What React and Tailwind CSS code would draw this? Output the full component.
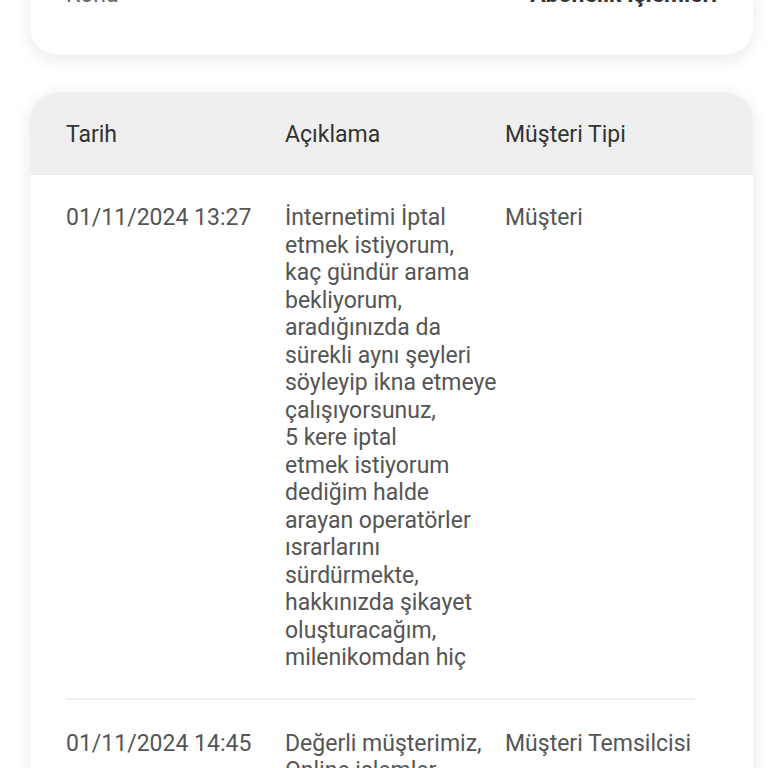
import React from "react";

const font = { fontFamily: "Roboto, 'Noto Sans', sans-serif" };

const row1 = [
  "İnternetimi İptal",
  "etmek istiyorum,",
  "kaç gündür arama",
  "bekliyorum,",
  "aradığınızda da",
  "sürekli aynı şeyleri",
  "söyleyip ikna etmeye",
  "çalışıyorsunuz,",
  "5 kere iptal",
  "etmek istiyorum",
  "dediğim halde",
  "arayan operatörler",
  "ısrarlarını",
  "sürdürmekte,",
  "hakkınızda şikayet",
  "oluşturacağım,",
  "milenikomdan hiç",
];

const row2 = ["Değerli müşterimiz,", "Online işlemler"];

function Row({ date, lines, type, pt, pb, divider }) {
  return (
    <div className={divider ? "border-b-2 border-[#efefef]" : ""}>
      <div className={`flex text-[23px] leading-[27.5px] text-[#555] ${pt} ${pb}`}>
        <div className="w-[219px] shrink-0 whitespace-nowrap">{date}</div>
        <div className="w-[220px] shrink-0 whitespace-nowrap">
          {lines.map((l, i) => (
            <div key={i}>{l}</div>
          ))}
        </div>
        <div className="whitespace-nowrap">{type}</div>
      </div>
    </div>
  );
}

export default function App() {
  return (
    <div className="w-[768px] h-[768px] overflow-hidden bg-white" style={font}>
      <div className="pl-[30px] pr-[15px] -mt-[40px]">
        <div className="bg-white rounded-[28px] shadow-[0_4px_18px_rgba(0,0,0,0.09)] pt-[21px] pb-[47px] pl-[36px] pr-[36px]">
          <div className="flex justify-between text-[23px] leading-[27px]">
            <span className="text-[#666]">Konu</span>
            <span className="font-bold text-[#333]">Abonelik İşlemleri</span>
          </div>
        </div>
        <div className="mt-[37px] bg-white rounded-[28px] shadow-[0_4px_18px_rgba(0,0,0,0.09)] overflow-hidden">
          <div className="bg-[#efefef] h-[83px] flex items-center pt-[3px] pl-[36px] text-[23px] text-[#333]">
            <div className="w-[219px]">Tarih</div>
            <div className="w-[220px]">Açıklama</div>
            <div>Müşteri Tipi</div>
          </div>
          <div className="pl-[36px] pr-[58px]">
            <Row
              date="01/11/2024 13:27"
              lines={row1}
              type="Müşteri"
              pt="pt-[29px]"
              pb="pb-[26px]"
              divider
            />
            <Row
              date="01/11/2024 14:45"
              lines={row2}
              type="Müşteri Temsilcisi"
              pt="pt-[30px]"
              pb="pb-[26px]"
            />
          </div>
        </div>
      </div>
    </div>
  );
}
